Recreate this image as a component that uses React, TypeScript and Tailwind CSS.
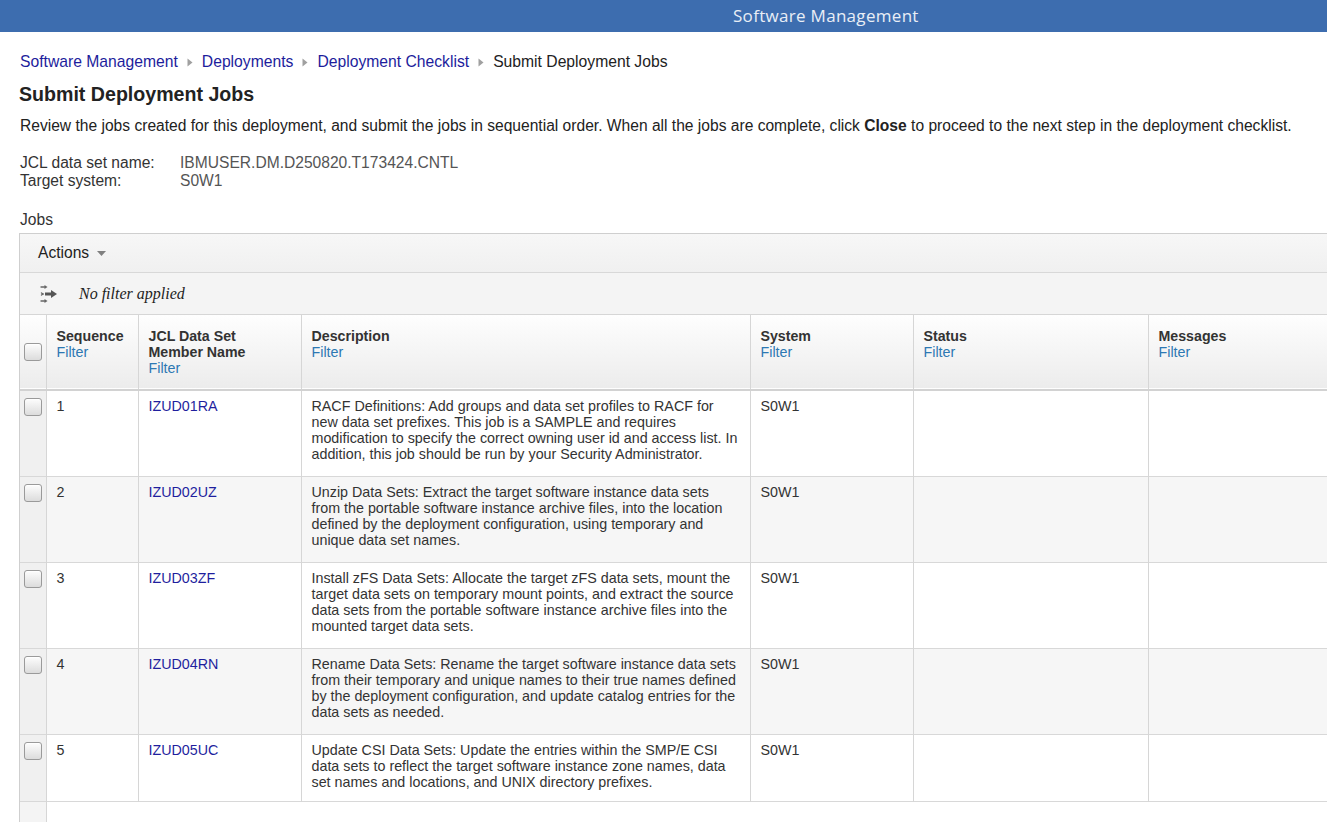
import React from "react";

const rows = [
  {
    seq: "1",
    name: "IZUD01RA",
    desc: "RACF Definitions: Add groups and data set profiles to RACF for new data set prefixes. This job is a SAMPLE and requires modification to specify the correct owning user id and access list. In addition, this job should be run by your Security Administrator.",
  },
  {
    seq: "2",
    name: "IZUD02UZ",
    desc: "Unzip Data Sets: Extract the target software instance data sets from the portable software instance archive files, into the location defined by the deployment configuration, using temporary and unique data set names.",
  },
  {
    seq: "3",
    name: "IZUD03ZF",
    desc: "Install zFS Data Sets: Allocate the target zFS data sets, mount the target data sets on temporary mount points, and extract the source data sets from the portable software instance archive files into the mounted target data sets.",
  },
  {
    seq: "4",
    name: "IZUD04RN",
    desc: "Rename Data Sets: Rename the target software instance data sets from their temporary and unique names to their true names defined by the deployment configuration, and update catalog entries for the data sets as needed.",
  },
  {
    seq: "5",
    name: "IZUD05UC",
    desc: "Update CSI Data Sets: Update the entries within the SMP/E CSI data sets to reflect the target software instance zone names, data set names and locations, and UNIX directory prefixes.",
  },
];

function Checkbox() {
  return (
    <div className="w-[18px] h-[18px] rounded-[3px] border border-[#9a9a9a] bg-gradient-to-b from-[#fdfdfd] to-[#dcdcdc] shadow-[inset_0_1px_0_#fff]" />
  );
}

function Sep() {
  return (
    <svg width="6" height="9" viewBox="0 0 6 9" className="mx-[9px] mt-[1px]">
      <path d="M0.5 0.5 L5.5 4.5 L0.5 8.5 Z" fill="#a0a0a0" />
    </svg>
  );
}

function FilterIcon() {
  return (
    <svg width="20" height="20" viewBox="0 0 20 20">
      <g stroke="#666" strokeWidth="1.4" fill="none" strokeLinecap="round">
        <path d="M2 3 L6 3" />
        <path d="M2 17 L6 17" />
        <path d="M2.5 9 L4 10" />
        <path d="M2.5 11 L4 10" />
      </g>
      <g fill="#666">
        <path d="M5.5 1 L8.5 3 L5.5 5 Z" />
        <path d="M5.5 15 L8.5 17 L5.5 19 Z" />
      </g>
      <path d="M6 8.5 L12 8.5 L12 6 L18 10 L12 14 L12 11.5 L6 11.5 Z" fill="#555" />
    </svg>
  );
}

export default function App() {
  const cols = [
    { label: ["Sequence"], w: "w-[92px]" },
    { label: ["JCL Data Set", "Member Name"], w: "w-[163px]" },
    { label: ["Description"], w: "w-[449px]" },
    { label: ["System"], w: "w-[163px]" },
    { label: ["Status"], w: "w-[235px]" },
    { label: ["Messages"], w: "w-[250px]" },
  ];
  const cell = "border-r border-[#d6d6d6] align-top pt-[7px] text-[14.3px] leading-[16px]";
  return (
    <div className="w-[1327px] h-[822px] overflow-hidden bg-white font-['Liberation_Sans',Arial,sans-serif] text-[#222]">
      <div className="h-[32px] bg-[#3d6daf] flex items-center pl-[733px]">
        <span className="font-['Open_Sans',sans-serif] text-[17px] text-[#e9eef6] tracking-[0.3px]">
          Software Management
        </span>
      </div>

      <div className="pl-[20px]">
        <div className="flex items-center mt-[20px] text-[15.7px] leading-[20px]">
          <span className="text-[#1d1d9c]">Software Management</span>
          <Sep />
          <span className="text-[#1d1d9c]">Deployments</span>
          <Sep />
          <span className="text-[#1d1d9c]">Deployment Checklist</span>
          <Sep />
          <span className="text-[#222]">Submit Deployment Jobs</span>
        </div>
        <h1 className="mt-[10px] text-[19.6px] leading-[24px] font-bold text-[#222] -ml-px">
          Submit Deployment Jobs
        </h1>
        <p className="mt-[10px] text-[15.6px] leading-[20px] text-[#222] whitespace-nowrap">
          Review the jobs created for this deployment, and submit the jobs in sequential order. When all the jobs are complete, click <b>Close</b> to proceed to the next step in the deployment checklist.
        </p>
        <div className="mt-[18px] text-[15.6px] leading-[18px]">
          <div className="flex">
            <span className="w-[160px] text-[#333]">JCL data set name:</span>
            <span className="text-[#555]">IBMUSER.DM.D250820.T173424.CNTL</span>
          </div>
          <div className="flex">
            <span className="w-[160px] text-[#333]">Target system:</span>
            <span className="text-[#555]">S0W1</span>
          </div>
        </div>
        <div className="mt-[21px] text-[15.6px] leading-[18px] text-[#333]">Jobs</div>
      </div>

      <div className="ml-[19px] mt-[4px] w-[1400px] border border-[#cfcfcf]">
        <div className="h-[39px] bg-gradient-to-b from-[#f7f7f7] to-[#f0f0f0] border-b border-[#d8d8d8] flex items-center pl-[18px]">
          <span className="text-[15.6px] text-[#222]">Actions</span>
          <svg width="9" height="5" viewBox="0 0 9 5" className="ml-[8px]">
            <path d="M0 0 L9 0 L4.5 5 Z" fill="#808080" />
          </svg>
        </div>
        <div className="h-[42px] bg-[#f4f4f4] border-b border-[#d6d6d6] flex items-center pl-[19px]">
          <FilterIcon />
          <span className="ml-[20px] font-['Liberation_Serif',serif] italic text-[16px] text-[#222]">
            No filter applied
          </span>
        </div>

        <table className="border-collapse table-fixed">
          <thead>
            <tr className="h-[75px] bg-gradient-to-b from-[#fefefe] to-[#ececec] border-b-2 border-[#d2d2d2]">
              <th className="w-[26px] border-r border-[#d6d6d6] align-middle p-0">
                <div className="flex justify-center pl-[1px]">
                  <Checkbox />
                </div>
              </th>
              {cols.map((c, i) => (
                <th
                  key={i}
                  className={`${c.w} border-r border-[#d6d6d6] align-top text-left pt-[13px] pl-[10px] pr-[10px] font-normal`}
                >
                  {c.label.map((l) => (
                    <div key={l} className="text-[14.2px] leading-[16px] font-bold text-[#333]">
                      {l}
                    </div>
                  ))}
                  <div className="text-[14.3px] leading-[16px] text-[#2d78b3]">Filter</div>
                </th>
              ))}
            </tr>
          </thead>
          <tbody>
            {rows.map((r, i) => (
              <tr
                key={r.seq}
                className={`${i === 4 ? "h-[67px]" : "h-[86px]"} ${i % 2 === 1 ? "bg-[#f6f6f6]" : "bg-white"} border-b border-[#d8d8d8]`}
              >
                <td className="bg-[#f0f0f0] border-r border-[#d6d6d6] align-top p-0 pt-[7px]">
                  <div className="flex justify-center pl-[1px]">
                    <Checkbox />
                  </div>
                </td>
                <td className={`${cell} px-[10px] text-[#333]`}>{r.seq}</td>
                <td className={`${cell} px-[10px] text-[#1f1f9e]`}>{r.name}</td>
                <td className={`${cell} pl-[10px] pr-[11px] text-[#333]`}>{r.desc}</td>
                <td className={`${cell} px-[10px] text-[#333]`}>S0W1</td>
                <td className="border-r border-[#d6d6d6] align-top" />
                <td className="border-r border-[#d6d6d6] align-top" />
              </tr>
            ))}
            <tr className="h-[40px]">
              <td className="bg-[#f4f4f4] border-r border-[#d6d6d6]" />
              <td colSpan={6} />
            </tr>
          </tbody>
        </table>
      </div>
    </div>
  );
}
